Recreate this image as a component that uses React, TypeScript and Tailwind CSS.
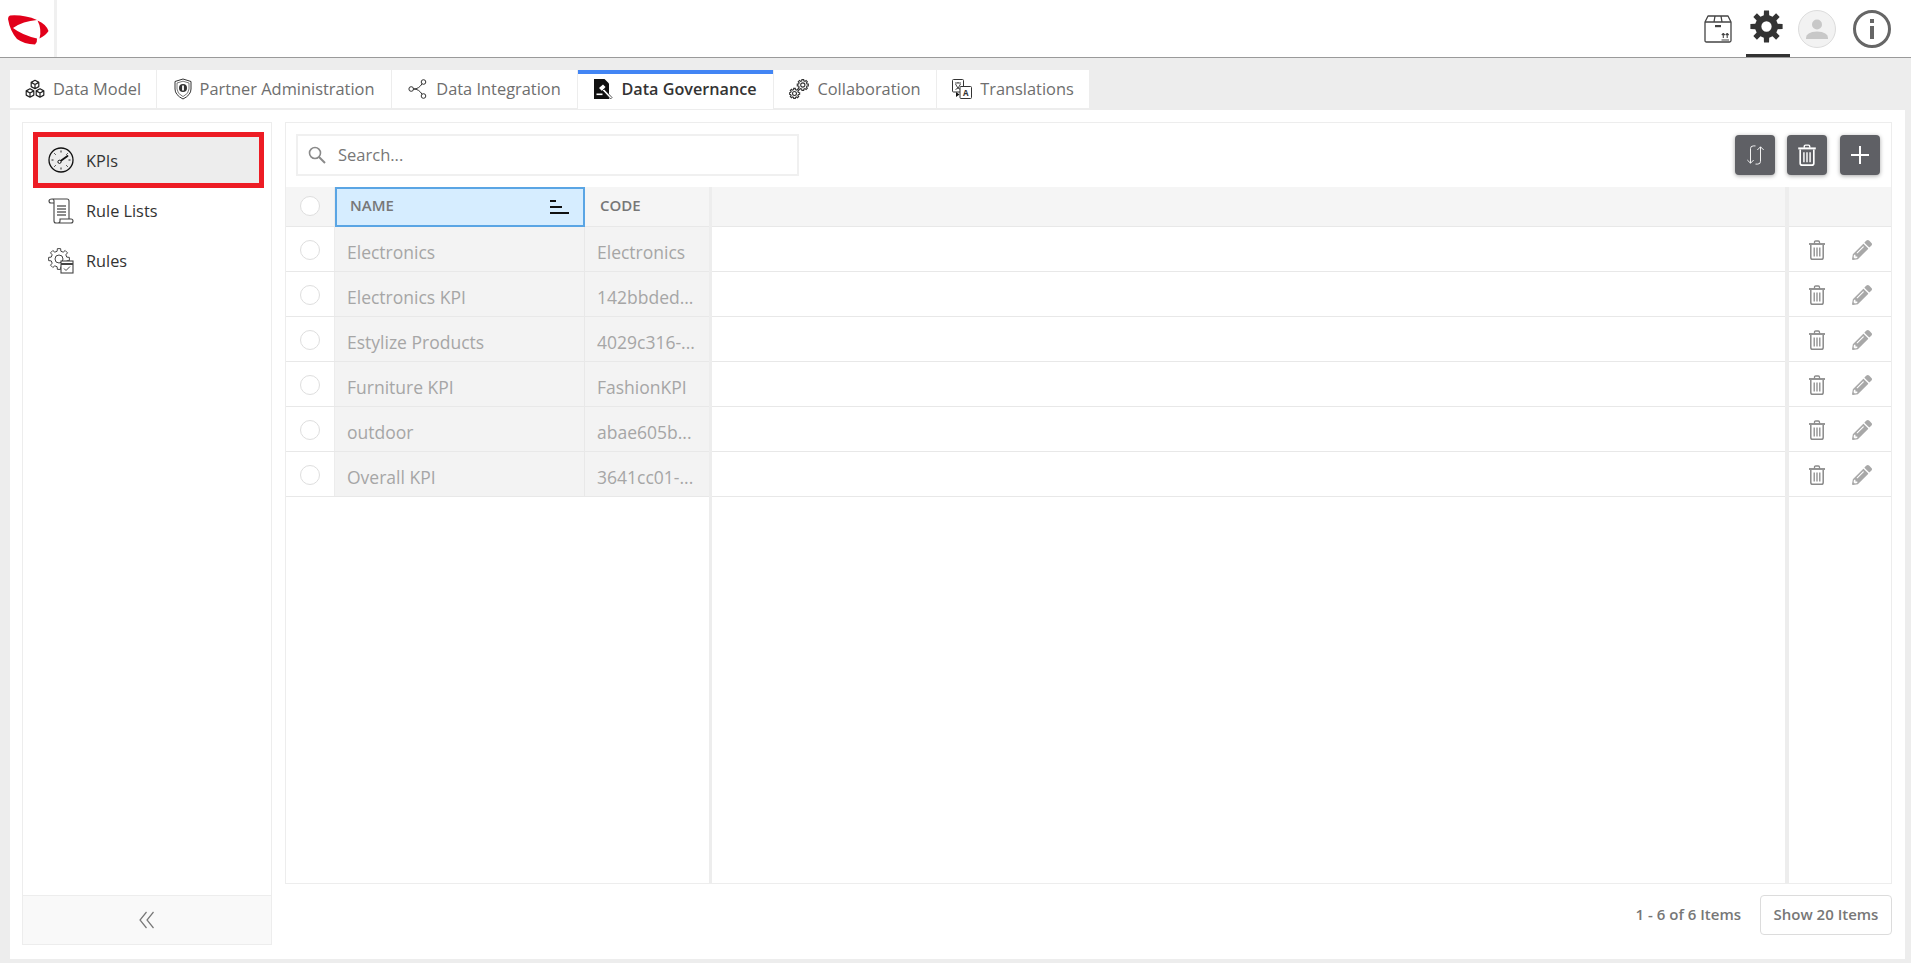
import React from "react";
import { FaPencilAlt } from "react-icons/fa";

function gearPath(cx: number, cy: number, outer: number, inner: number, hole: number, teeth: number) {
  const pts: string[] = [];
  const step = (Math.PI * 2) / teeth;
  for (let i = 0; i < teeth; i++) {
    const a = i * step - Math.PI / 2;
    const w = step * 0.2;
    const w2 = step * 0.3;
    const p = (r: number, t: number) => `${(cx + r * Math.cos(t)).toFixed(2)} ${(cy + r * Math.sin(t)).toFixed(2)}`;
    pts.push(p(inner, a - w2), p(outer, a - w), p(outer, a + w), p(inner, a + w2));
  }
  const ring = "M" + pts.join("L") + "Z";
  const h = `M${cx - hole} ${cy}a${hole} ${hole} 0 1 0 ${hole * 2} 0a${hole} ${hole} 0 1 0 ${-hole * 2} 0Z`;
  return ring + h;
}

const Logo = () => (
  <svg width="60" height="50" viewBox="0 0 60 50" className="shrink-0">
    <path fill="#e2001a" d="M10 11.5 Q24 10.5 37 16 Q23 17 13 24 Q22 31 37 34.5 Q37.5 38 35 40.5 Q24 40 17 35 Q10 27 8 15 Q8 12 10 11.5Z" />
    <path fill="#e2001a" d="M37.5 16.5 Q46 20 48.5 27 Q46 31 39.5 34.5 Q42 25 37.5 16.5Z" />
  </svg>
);

const Cube = ({ x, y }: { x: number; y: number }) => (
  <g transform={`translate(${x} ${y})`}>
    <path d="M0 -4.2 L3.8 -2.1 V2.1 L0 4.2 L-3.8 2.1 V-2.1Z M-3.8 -2.1 L0 0 L3.8 -2.1 M0 0 V4.2" />
  </g>
);
const DataModelIcon = () => (
  <svg width="20" height="20" viewBox="0 0 20 20" fill="none" stroke="#222" strokeWidth="1.2" strokeLinejoin="round" className="shrink-0">
    <Cube x={10} y={5.5} />
    <Cube x={5} y={14} />
    <Cube x={15} y={14} />
  </svg>
);
const ShieldIcon = () => (
  <svg width="18" height="22" viewBox="0 0 18 22" fill="none" className="shrink-0">
    <path d="M9 1 L17 3.5 V11 Q17 17 9 21 Q1 17 1 11 V3.5Z" stroke="#333" strokeWidth="1" />
    <path d="M9 3.2 L15 5 V11 Q15 15.6 9 18.6 Q3 15.6 3 11 V5Z" stroke="#555" strokeWidth=".8" />
    <circle cx="9" cy="10" r="4" fill="#333" />
    <rect x="8.1" y="7.5" width="1.8" height="5" fill="#fff" />
  </svg>
);
const ShareIcon = () => (
  <svg width="20" height="20" viewBox="0 0 20 20" fill="none" stroke="#333" strokeWidth="1" className="shrink-0">
    <circle cx="3.2" cy="10" r="2.3" />
    <circle cx="15.5" cy="3" r="2.3" />
    <circle cx="15.5" cy="17" r="2.3" />
    <path d="M5.5 10 Q11 10 14 4.8 M5.5 10 Q11 10 14 15.2" />
  </svg>
);
const GovIcon = () => (
  <svg width="19" height="21" viewBox="0 0 19 21" className="shrink-0">
    <path d="M0 0 H10.5 L15 4.5 V20 H0Z" fill="#111" />
    <path d="M5 9 L9 5.5 L11.5 8 L8 12Z" fill="#fff" />
    <path d="M10 10 L18 18.5 L16.5 20 L8.5 11.5Z" fill="#fff" stroke="#111" strokeWidth=".7" />
    <rect x="2.5" y="14.5" width="6" height="1.6" fill="#fff" />
  </svg>
);
const SmallGear = ({ cx, cy, r }: { cx: number; cy: number; r: number }) => (
  <g>
    <path d={gearPath(cx, cy, r, r * 0.76, r * 0.38, 8)} fill="none" stroke="#333" strokeWidth="1.1" />
  </g>
);
const CollabIcon = () => (
  <svg width="20" height="20" viewBox="0 0 20 20" className="shrink-0">
    <SmallGear cx={13.8} cy={6} r={5.6} />
    <SmallGear cx={5.5} cy={14.5} r={5.2} />
  </svg>
);
const TransIcon = () => (
  <svg width="20" height="20" viewBox="0 0 20 20" fill="none" className="shrink-0">
    <rect x="0.5" y="0.5" width="11" height="12.5" rx="1" stroke="#333" />
    <path d="M3 4 H9 M6 3 V4 M3.5 5 Q5.5 10 8.5 10.5 M8.5 5 Q6.5 10 3.5 10.5" stroke="#333" strokeWidth=".9" />
    <rect x="8" y="7.5" width="11.5" height="12" rx="1" fill="#fff" stroke="#333" />
    <path d="M4 13 L7.5 15.5 L4 18Z" fill="#111" />
    <text x="13.8" y="17" textAnchor="middle" fontSize="8" fontWeight="700" fill="#333" fontFamily="Open Sans">A</text>
  </svg>
);

const BoxIcon = () => (
  <svg width="28" height="28" viewBox="0 0 28 28" fill="none" stroke="#444" strokeWidth="1.3" strokeLinejoin="round" className="shrink-0">
    <path d="M1 7 L4 1 H24 L27 7 V25.5 Q27 27 25.5 27 H2.5 Q1 27 1 25.5Z" />
    <path d="M1 7 H27 M11 1 L10 7 M17 1 L18 7" />
    <rect x="11" y="10" width="6" height="2.2" fill="#444" stroke="none" />
    <path d="M17.5 25 H25 M19.3 23 V18.5 M17.8 20 L19.3 18.5 L20.8 20 M23.2 23 V18.5 M21.7 20 L23.2 18.5 L24.7 20" strokeWidth="1.1" />
  </svg>
);

const TrashIcon = ({ color, w = 18, h = 20 }: { color: string; w?: number; h?: number }) => (
  <svg width={w} height={h} viewBox="0 0 18 20" fill="none" stroke={color} className="shrink-0">
    <path d="M1 4 H17" strokeWidth="1.8" />
    <path d="M6.5 3.5 V2.2 Q6.5 1 7.7 1 H10.3 Q11.5 1 11.5 2.2 V3.5" strokeWidth="1.3" />
    <path d="M2.8 5 V17.4 Q2.8 19.2 4.6 19.2 H13.4 Q15.2 19.2 15.2 17.4 V5" strokeWidth="1.5" />
    <path d="M6.2 7.5 V16.5 M9 7.5 V16.5 M11.8 7.5 V16.5" strokeWidth="1.3" />
  </svg>
);

const Gauge = () => (
  <svg width="26" height="26" viewBox="0 0 26 26" fill="none" stroke="#111" className="shrink-0">
    <circle cx="13" cy="13" r="12" strokeWidth="1.3" />
    <path d="M13 3.5 V5.5 M13 20.5 V22.5 M3.5 13 H5.5 M20.5 13 H22.5 M6.3 6.3 L7.7 7.7 M19.7 6.3 L18.3 7.7 M6.3 19.7 L7.7 18.3 M19.7 19.7 L18.3 18.3" strokeWidth=".9" />
    <path d="M11.5 14.8 L19.5 9" strokeWidth="1.8" strokeLinecap="round" />
    <circle cx="11.5" cy="14.8" r="1.6" fill="#fff" strokeWidth="1" />
  </svg>
);
const ScrollIcon = () => (
  <svg width="26" height="26" viewBox="0 0 26 26" fill="none" stroke="#444" strokeWidth="1.1" className="shrink-0">
    <path d="M4 1 H19 Q21 1 21 3 V21 M4 1 Q1 1 1 3 Q1 5 3 5 H6 V3 Q6 1 4 1 M6 5 V23 Q6 25 8 25 H23 Q25 25 25 23 Q25 21 23 21 H12 V23 Q12 25 10 25" />
    <path d="M9 8 H18 M9 11 H18 M9 14 H18 M9 17 H18" strokeWidth="1.5" stroke="#666" />
  </svg>
);
const RulesIcon = () => (
  <svg width="26" height="26" viewBox="0 0 26 26" fill="none" className="shrink-0">
    <path d={gearPath(11, 11, 10.5, 8, 4, 8)} stroke="#444" strokeWidth="1" />
    <rect x="13" y="13" width="12" height="12" fill="#fff" stroke="#444" strokeWidth="1.1" />
    <path d="M13 16 H25" stroke="#444" strokeWidth="2" />
    <path d="M16 20.5 L18 22.5 L22 18.5" stroke="#444" strokeWidth="1" />
  </svg>
);

const Tab = ({ icon, label, w, active }: { icon: React.ReactNode; label: string; w: string; active?: boolean }) => (
  <div
    className={
      "flex items-center justify-center gap-[8px] " +
      w +
      (active
        ? " bg-white border-t-[4px] border-[#4285f4] font-semibold text-[#333] h-[39px] pb-[4px] text-[16.2px]"
        : " bg-white text-[#6e6e6e] h-[38px] text-[16.4px]")
    }
  >
    {icon}
    <span>{label}</span>
  </div>
);

const rows = [
  ["Electronics", "Electronics"],
  ["Electronics KPI", "142bbded..."],
  ["Estylize Products", "4029c316-..."],
  ["Furniture KPI", "FashionKPI"],
  ["outdoor", "abae605b..."],
  ["Overall KPI", "3641cc01-..."],
];

const Radio = () => <div className="w-[20px] h-[20px] rounded-full border border-[#dedede] bg-white" />;

export default function App() {
  return (
    <div className="h-screen bg-[#ededed] flex flex-col overflow-hidden font-['Open_Sans',sans-serif]">
      <header className="h-[58px] shrink-0 bg-white border-b border-[#9a9a9a] flex items-center">
        <div className="w-[54px] h-full flex items-center overflow-hidden"><Logo /></div>
        <div className="w-[3px] h-full bg-[#f0f0f0]" />
        <div className="flex-1" />
        <div className="flex items-center h-full pr-[20px]">
          <BoxIcon />
          <div className="ml-[14px] w-[44px] h-full border-b-[3px] border-[#333] flex items-center justify-center pb-[2px] pr-[4px]">
            <svg width="33" height="33" viewBox="0 0 32 32" className="shrink-0">
              <path d={gearPath(16, 16, 15.8, 11.2, 5, 8)} fill="#333" fillRule="evenodd" />
            </svg>
          </div>
          <div className="ml-[8px] w-[38px] h-[38px] rounded-full bg-[#f2f2f2] border border-[#dcdcdc] flex items-center justify-center">
            <svg width="22" height="22" viewBox="0 0 22 22" fill="#c8c8c8">
              <circle cx="11" cy="6.5" r="5" />
              <path d="M0 20 Q0 14 11 13.5 Q22 14 22 20 V21 H0Z" />
            </svg>
          </div>
          <div className="ml-[17px] w-[38px] h-[38px] rounded-full border-[3px] border-[#666] flex flex-col items-center justify-center">
            <div className="w-[4px] h-[4px] bg-[#666] mb-[3px]" />
            <div className="w-[4px] h-[13px] bg-[#666]" />
          </div>
        </div>
      </header>

      <div className="flex-1 flex flex-col pl-[10px] pr-[6px] pt-[12px]">
        <div className="flex items-start h-[38px] gap-[1px]">
          <Tab icon={<DataModelIcon />} label="Data Model" w="w-[146px]" />
          <Tab icon={<ShieldIcon />} label="Partner Administration" w="w-[234px]" />
          <Tab icon={<ShareIcon />} label="Data Integration" w="w-[185px]" />
          <Tab icon={<GovIcon />} label="Data Governance" w="w-[195px]" active />
          <Tab icon={<CollabIcon />} label="Collaboration" w="w-[162px]" />
          <Tab icon={<TransIcon />} label="Translations" w="w-[152px]" />
        </div>

        <div className="mt-[2px] h-[849px] bg-white flex gap-[13px] pl-[12px] pr-[13px] pt-[12px]">
          {/* Left panel */}
          <aside className="w-[250px] h-[823px] shrink-0 border border-[#ededed] flex flex-col">
            <nav className="flex-1 pt-[9px] pl-[10px] pr-[7px] flex flex-col text-[16.3px] text-[#333]">
              <div className="h-[56px] border-[5px] border-[#ed1c24] bg-[#ededed] flex items-center gap-[12px] pl-[10px]">
                <Gauge />
                <span className="pt-[2px]">KPIs</span>
              </div>
              <div className="h-[46px] flex items-center gap-[12px] pl-[15px]">
                <ScrollIcon />
                <span>Rule Lists</span>
              </div>
              <div className="mt-[4px] h-[46px] flex items-center gap-[12px] pl-[15px]">
                <RulesIcon />
                <span>Rules</span>
              </div>
            </nav>
            <div className="h-[49px] bg-[#f9f9f9] border-t border-[#ededed] flex items-center justify-center">
              <svg width="16" height="18" viewBox="0 0 16 18" fill="none" stroke="#777" strokeWidth="1.2">
                <path d="M7.5 1 L1 9 L7.5 17 M14.5 1 L8 9 L14.5 17" />
              </svg>
            </div>
          </aside>

          {/* Main panel */}
          <main className="flex-1 flex flex-col min-w-0">
            <div className="h-[762px] border border-[#ededed] flex flex-col">
              <div className="h-[64px] shrink-0 flex items-start justify-between pl-[10px] pr-[11px] pt-[11px]">
                <div className="w-[503px] h-[42px] border-2 border-[#f0f0f0] flex items-center gap-[12px] pl-[10px] text-[16.5px] text-[#777]">
                  <svg width="18" height="18" viewBox="0 0 18 18" fill="none" stroke="#8a8a8a" strokeWidth="1.6" className="shrink-0">
                    <circle cx="7" cy="7" r="5.5" />
                    <path d="M11 11 L17 17" strokeWidth="2" />
                  </svg>
                  <span>Search...</span>
                </div>
                <div className="flex gap-[12px] pt-[1px]">
                  <button className="w-[40px] h-[40px] rounded-[4px] bg-[#5f6065] shadow-[0_1px_4px_rgba(0,0,0,0.35)] flex items-center justify-center">
                    <svg width="19" height="20" viewBox="0 0 20 22" fill="none" stroke="#fff" strokeWidth="1">
                      <path d="M10 1 H7.5 Q4.5 1 4.5 4 V20 M1 16.5 L4.5 20 L8 16.5" />
                      <path d="M10 21 H12.5 Q15.5 21 15.5 18 V2 M12 5.5 L15.5 2 L19 5.5" />
                    </svg>
                  </button>
                  <button className="w-[40px] h-[40px] rounded-[4px] bg-[#5f6065] shadow-[0_1px_4px_rgba(0,0,0,0.35)] flex items-center justify-center">
                    <TrashIcon color="#fff" w={20} h={22} />
                  </button>
                  <button className="ml-[1px] w-[40px] h-[40px] rounded-[4px] bg-[#5f6065] shadow-[0_1px_4px_rgba(0,0,0,0.35)] flex items-center justify-center">
                    <svg width="20" height="20" viewBox="0 0 20 20" stroke="#fff" strokeWidth="2">
                      <path d="M10 1 V19 M1 10 H19" />
                    </svg>
                  </button>
                </div>
              </div>

              <div className="flex-1 flex min-h-0">
                {/* Frozen columns */}
                <div className="w-[426px] shrink-0 border-r-[3px] border-[#ededed]">
                  <div className="flex h-[40px] bg-[#f5f5f5] border-b border-[#e8e8e8] text-[15px] font-semibold text-[#777]">
                    <div className="w-[49px] flex items-center justify-center border-r border-[#ececec] pb-[2px]"><Radio /></div>
                    <div className="w-[250px] -mb-[1px] bg-[#d6edff] border-2 border-[#5aa5e4] flex items-center justify-between pl-[13px] pr-[14px]">
                      <span className="pb-[3px]">NAME</span>
                      <svg width="19" height="14" viewBox="0 0 19 14" fill="#111">
                        <rect x="0" y="0" width="6" height="2" />
                        <rect x="0" y="6" width="12" height="2" />
                        <rect x="0" y="12" width="19" height="2" />
                      </svg>
                    </div>
                    <div className="w-[124px] flex items-center pl-[15px] pb-[3px]">CODE</div>
                  </div>
                  {rows.map((r) => (
                    <div key={r[0]} className="flex h-[45px] border-b border-[#e8e8e8] text-[17.5px] text-[#a6a6a6]">
                      <div className="w-[49px] flex items-center justify-center border-r border-[#ececec] pt-[2px]"><Radio /></div>
                      <div className="w-[250px] bg-[#f3f3f3] border-r border-[#e8e8e8] flex items-center pl-[12px] pt-[6px]">{r[0]}</div>
                      <div className="w-[124px] bg-[#f3f3f3] flex items-center pl-[12px] pt-[6px] whitespace-nowrap overflow-hidden">{r[1]}</div>
                    </div>
                  ))}
                </div>

                {/* Flexible column */}
                <div className="flex-1 border-r-[4px] border-[#ededed]">
                  <div className="h-[40px] bg-[#f5f5f5] border-b border-[#e8e8e8]" />
                  {rows.map((r) => (
                    <div key={r[0]} className="h-[45px] border-b border-[#e8e8e8]" />
                  ))}
                </div>

                {/* Actions */}
                <div className="w-[102px] shrink-0">
                  <div className="h-[40px] bg-[#f5f5f5] border-b border-[#e8e8e8]" />
                  {rows.map((r) => (
                    <div key={r[0]} className="h-[45px] border-b border-[#e8e8e8] flex items-center gap-[26px] pl-[19px] pt-[2px]">
                      <TrashIcon color="#8a8a8a" />
                      <FaPencilAlt size={20} color="#a8a8a8" className="shrink-0" />
                    </div>
                  ))}
                </div>
              </div>
            </div>

            <div className="mt-[11px] h-[40px] flex items-center justify-end gap-[19px] text-[15px] font-semibold text-[#777]">
              <span className="pb-[1px]">1 - 6 of 6 Items</span>
              <div className="w-[132px] h-[40px] border border-[#dcdcdc] rounded-[4px] flex items-center justify-center pb-[1px]">Show 20 Items</div>
            </div>
          </main>
        </div>
      </div>
    </div>
  );
}
